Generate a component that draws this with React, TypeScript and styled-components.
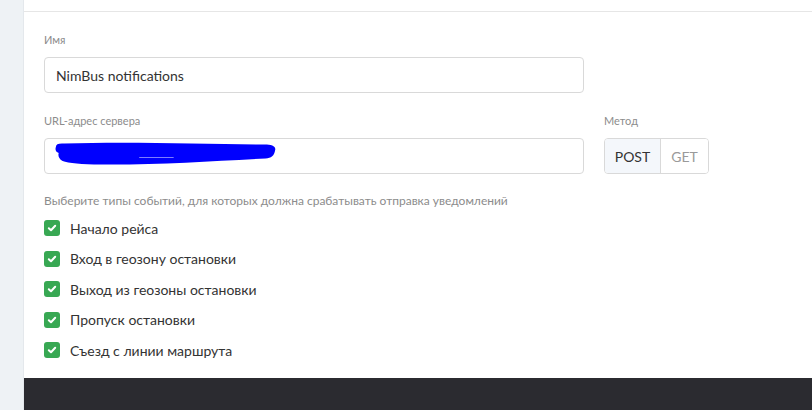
import React from "react";
import styled, { createGlobalStyle } from "styled-components";

const Global = createGlobalStyle`
  html, body { margin: 0; padding: 0; }
  body { font-family: Lato, "Open Sans", sans-serif; background: #fff; overflow: hidden; }
  * { box-sizing: border-box; }
`;

const Page = styled.div`
  display: flex;
  width: 812px;
  height: 410px;
`;

const Sidebar = styled.div`
  width: 24px;
  flex: none;
  background: #eef2f5;
  border-right: 1px solid #e4e8ec;
`;

const Main = styled.div`
  flex: 1;
  display: flex;
  flex-direction: column;
  min-width: 0;
`;

const TopBar = styled.div`
  height: 12px;
  flex: none;
  border-bottom: 1px solid #e6e6e6;
`;

const Content = styled.div`
  flex: 1;
  padding: 21px 20px 0 20px;
  display: flex;
  flex-direction: column;
`;

const Field = styled.div`
  display: flex;
  flex-direction: column;
  gap: 10px;
`;

const Label = styled.div`
  font-size: 11px;
  line-height: 14px;
  color: #8c8c8c;
`;

const InputBox = styled.div`
  width: 540px;
  height: 36px;
  border: 1px solid #d9d9d9;
  border-radius: 4px;
  display: flex;
  align-items: center;
  padding: 0 11px;
  font-size: 14px;
  color: #333;
  background: #fff;
`;

const Row = styled.div`
  display: grid;
  grid-template-columns: 540px auto;
  column-gap: 20px;
  margin-top: 21px;
  justify-content: start;
`;

const Segments = styled.div`
  display: flex;
  height: 36px;
  border: 1px solid #d9d9d9;
  border-radius: 4px;
  overflow: hidden;
  width: max-content;
`;

const Segment = styled.div<{ $active?: boolean }>`
  display: flex;
  align-items: center;
  justify-content: center;
  width: ${(p) => (p.$active ? "55px" : "48px")};
  font-size: 14px;
  color: ${(p) => (p.$active ? "#333" : "#9a9a9a")};
  background: ${(p) => (p.$active ? "#f4f7fb" : "#fff")};
  & + & { border-left: 1px solid #d9d9d9; }
`;

const Hint = styled.div`
  margin-top: 20px;
  font-size: 12px;
  line-height: 14px;
  color: #8c8c8c;
`;

const List = styled.div`
  margin-top: 5px;
  display: flex;
  flex-direction: column;
`;

const Item = styled.label`
  display: flex;
  align-items: center;
  gap: 10px;
  height: 30.5px;
  font-size: 14px;
  color: #333;
`;

const Box = styled.span`
  width: 16px;
  height: 16px;
  border-radius: 3px;
  background: #38a853;
  display: flex;
  align-items: center;
  justify-content: center;
  flex: none;
`;

const Footer = styled.div`
  height: 32px;
  flex: none;
  background: #2b2b30;
`;

const events = [
  "Начало рейса",
  "Вход в геозону остановки",
  "Выход из геозоны остановки",
  "Пропуск остановки",
  "Съезд с линии маршрута",
];

const Check = () => (
  <svg width="10" height="10" viewBox="0 0 10 10">
    <path d="M1.8 5.2 L4 7.3 L8.2 2.8" fill="none" stroke="#fff" strokeWidth="2" strokeLinecap="round" strokeLinejoin="round" />
  </svg>
);

const Scribble = () => (
  <svg width="226" height="30" viewBox="0 0 236 30" preserveAspectRatio="none" style={{ marginLeft: -3, marginTop: -1 }}>
    <path
      d="M3 6 C 3 3, 6 2, 12 2.5 C 80 0.5, 160 3, 221 3.5 C 228 3.5, 233 5, 232 9 C 231 15, 228 17, 222 17.5 C 170 20, 110 24, 50 23.5 C 30 23.5, 16 22, 10 20 C 6 18, 5 14, 6 12 C 3 11, 2 9, 3 6 Z"
      fill="#0000fe"
    />
    <path d="M90 16.5 L126 16.5" stroke="#8080ff" strokeWidth="1" />
  </svg>
);

export default function App() {
  return (
    <>
      <Global />
      <Page>
        <Sidebar />
        <Main>
          <TopBar />
          <Content>
            <Field>
              <Label>Имя</Label>
              <InputBox>NimBus notifications</InputBox>
            </Field>
            <Row>
              <Field>
                <Label>URL-адрес сервера</Label>
                <InputBox>
                  <Scribble />
                </InputBox>
              </Field>
              <Field>
                <Label>Метод</Label>
                <Segments>
                  <Segment $active>POST</Segment>
                  <Segment>GET</Segment>
                </Segments>
              </Field>
            </Row>
            <Hint>Выберите типы событий, для которых должна срабатывать отправка уведомлений</Hint>
            <List>
              {events.map((e) => (
                <Item key={e}>
                  <Box>
                    <Check />
                  </Box>
                  {e}
                </Item>
              ))}
            </List>
          </Content>
          <Footer />
        </Main>
      </Page>
    </>
  );
}
